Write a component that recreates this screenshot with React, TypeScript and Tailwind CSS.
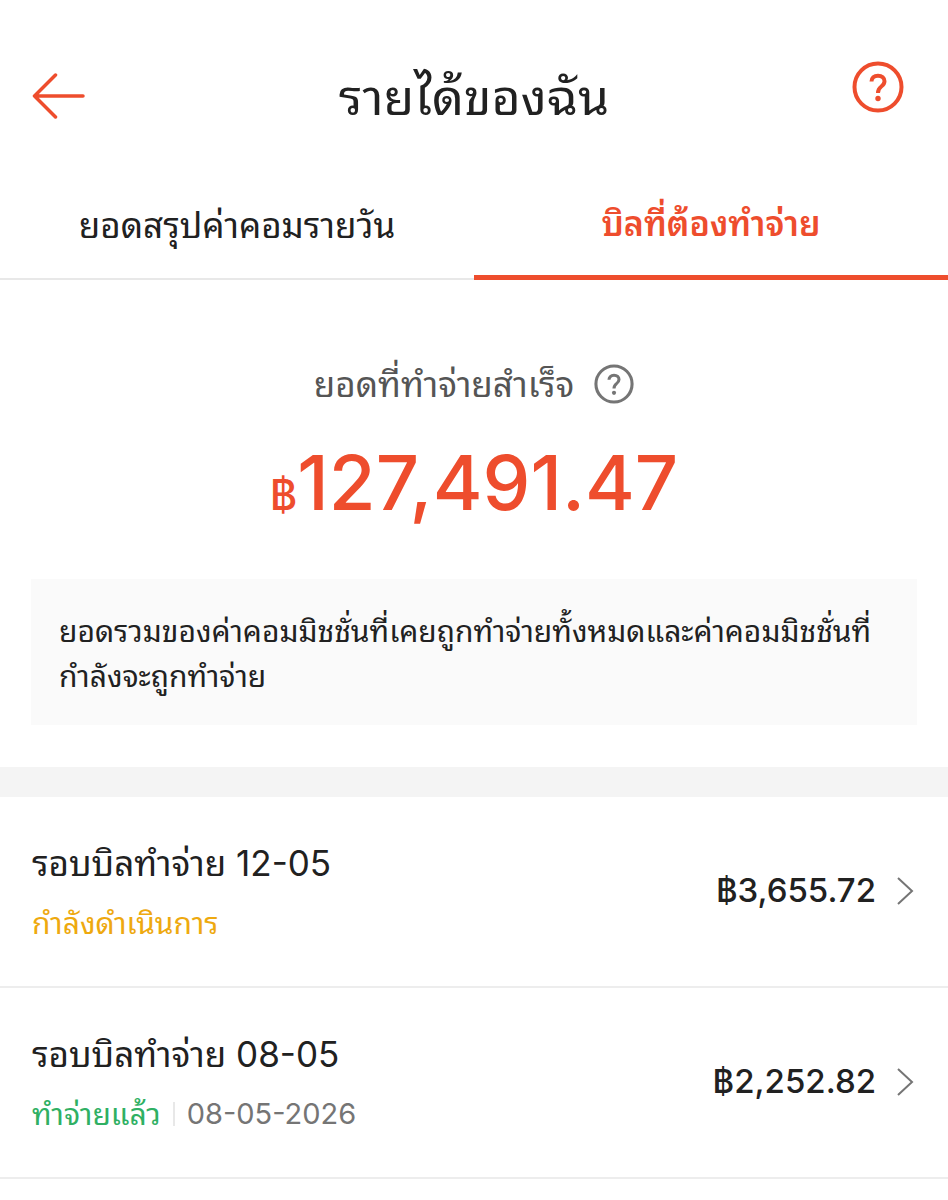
import React from 'react';

interface Bill {
  id: string;
  title: string;
  amount: string;
  status: 'processing' | 'paid';
  paidAt?: string;
}

const BILLS: Bill[] = [
  { id: '12-05', title: 'รอบบิลทำจ่าย 12-05', amount: '฿3,655.72', status: 'processing' },
  { id: '08-05', title: 'รอบบิลทำจ่าย 08-05', amount: '฿2,252.82', status: 'paid', paidAt: '08-05-2026' },
];

const BackArrow: React.FC = () => (
  <svg width="54" height="48" viewBox="0 0 54 48" fill="none" stroke="currentColor" strokeWidth="3.500" strokeLinecap="round" strokeLinejoin="round">
    <path d="M23.500 2L2.500 23l21 21M2.500 23H51" />
  </svg>
);

const HelpIcon: React.FC<{ className: string }> = ({ className }) => (
  <svg className={className} viewBox="0 0 52 52" fill="none" stroke="currentColor" strokeWidth="4">
    <circle cx="26" cy="26" r="23.500" />
    <path d="M19.500 20.500C19.500 17 22 14.700 26 14.700s6.500 2.300 6.500 5.600c0 2.500-1.300 3.800-3.200 5.200-2.200 1.600-3.300 2.700-3.300 6.500" />
    <circle cx="26" cy="37.500" r="2.700" fill="currentColor" stroke="none" />
  </svg>
);

const BillRow: React.FC<{ bill: Bill }> = ({ bill }) => (
  <li className="border-b-2 border-[#ededed]">
    <a href={`#bill-${bill.id}`} className="flex items-center justify-between pt-[34px] pr-[34px] pb-[35px] pl-8">
      <div className="flex flex-col">
        <span className="text-[35px] leading-[64px]">{bill.title}</span>
        <div className="flex items-center text-[30px] leading-[56px]">
          {bill.status === 'processing' ? (
            <span className="text-[#eea90f]">กำลังดำเนินการ</span>
          ) : (
            <>
              <span className="text-[#2fb063]">ทำจ่ายแล้ว</span>
              <span className="mx-3 h-6 w-0.5 bg-[#e8e8e8]" />
              <span className="text-[29px] text-[#757575]">{bill.paidAt}</span>
            </>
          )}
        </div>
      </div>
      <div className="flex items-center gap-5">
        <span className="text-[33px] font-medium">{bill.amount}</span>
        <svg width="18" height="30" viewBox="0 0 18 30" fill="none" stroke="#757575" strokeWidth="2">
          <path d="M2 2l14 13L2 28" />
        </svg>
      </div>
    </a>
  </li>
);

export default function App() {
  return (
    <div className="min-h-screen bg-white font-['Inter','Noto_Sans_Thai_Looped','Noto_Serif_Thai',sans-serif] text-[#212121]">
      <header className="grid grid-cols-[1fr_auto_1fr] items-center px-8 pt-[60px]">
        <button type="button" aria-label="ย้อนกลับ" className="justify-self-start text-[#ee4d2d]">
          <BackArrow />
        </button>
        <h1 className="text-[50px] leading-[74px]">รายได้ของฉัน</h1>
        <button type="button" aria-label="ช่วยเหลือ" className="mr-3 justify-self-end pb-5 text-[#ee4d2d]">
          <HelpIcon className="size-[52px]" />
        </button>
      </header>

      <nav className="mt-[38px] grid grid-cols-2">
        <button type="button" className="h-[108px] border-b-2 border-[#e8e8e8] text-[35px]">
          ยอดสรุปค่าคอมรายวัน
        </button>
        <button type="button" className="h-[108px] border-b-[5px] border-[#ee4d2d] text-[34px] font-semibold text-[#ee4d2d]">
          บิลที่ต้องทำจ่าย
        </button>
      </nav>

      <section className="flex flex-col items-center px-[31px] pt-20 pb-[42px]">
        <div className="flex items-center gap-5 text-[#555555]">
          <h2 className="text-[35px] leading-[48px]">ยอดที่ทำจ่ายสำเร็จ</h2>
          <button type="button" aria-label="คำอธิบายยอด" className="text-[#757575]">
            <HelpIcon className="size-10" />
          </button>
        </div>
        <p className="mt-[26px] flex items-baseline font-medium text-[#ee4d2d]">
          <span className="text-[42px] leading-none">฿</span>
          <span className="text-[76px] leading-[96px]">127,491.47</span>
        </p>
        <p className="mt-[49px] w-full bg-[#fafafa] px-7 pt-[30px] pb-[26px] text-[30px] leading-[45px]">
          ยอดรวมของค่าคอมมิชชั่นที่เคยถูกทำจ่ายทั้งหมดและค่าคอมมิชชั่นที่กำลังจะถูกทำจ่าย
        </p>
      </section>

      <div className="h-[30px] bg-[#f4f4f4]" />

      <ul>
        {BILLS.map((bill) => (
          <BillRow key={bill.id} bill={bill} />
        ))}
      </ul>
    </div>
  );
}
